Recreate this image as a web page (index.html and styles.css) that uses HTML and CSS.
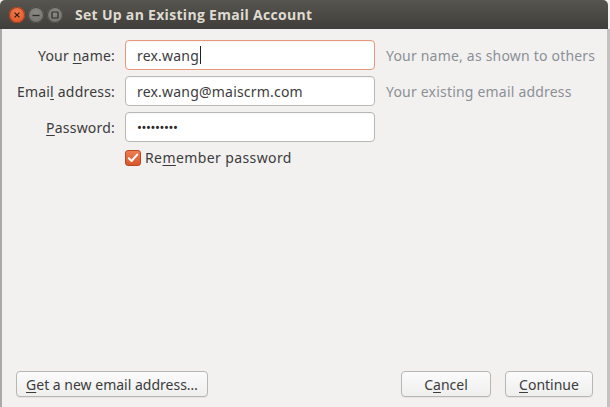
FILE: index.html
```html
<!DOCTYPE html>
<html>
<head>
<meta charset="utf-8">
<link rel="stylesheet" href="styles.css">
</head>
<body>
<div class="window">
  <div class="titlebar">
    <div class="controls">
      <span class="wbtn close"><svg width="16" height="16" viewBox="0 0 16 16"><path d="M5.6 5.6L10.4 10.4M10.4 5.6L5.6 10.4" stroke="#3b1a10" stroke-width="1.3" fill="none"/></svg></span>
      <span class="wbtn"><svg width="16" height="16" viewBox="0 0 16 16"><path d="M4.5 8.5H11.5" stroke="#2e2d2a" stroke-width="1.3"/></svg></span>
      <span class="wbtn"><svg width="16" height="16" viewBox="0 0 16 16"><rect x="5" y="5" width="6" height="6" rx="0.5" stroke="#2e2d2a" stroke-width="1.2" fill="none"/></svg></span>
    </div>
    <div class="title">Set Up an Existing Email Account</div>
  </div>
  <div class="content">
    <div class="form">
      <label class="label"><span>Your <u>n</u>ame:</span></label>
      <div class="input focus"><span>rex.wang</span><span class="caret"></span></div>
      <div class="hint">Your name, as shown to others</div>

      <label class="label"><span>Emai<u>l</u> address:</span></label>
      <div class="input"><span>rex.wang@maiscrm.com</span></div>
      <div class="hint">Your existing email address</div>

      <label class="label"><span><u>P</u>assword:</span></label>
      <div class="input pw"><span>•••••••••</span></div>
      <div class="hint"></div>

      <div></div>
      <div class="check-row"><span class="checkbox"><svg width="16" height="16" viewBox="0 0 16 16"><path d="M3.8 8.2L6.6 11L12.2 4.6" stroke="#fff" stroke-width="2" fill="none" stroke-linecap="round" stroke-linejoin="round"/></svg></span><span>Re<u>m</u>ember password</span></div>
      <div></div>
    </div>
    <div class="footer">
      <button class="btn wide"><u>G</u>et a new email address…</button>
      <div class="right">
        <button class="btn cancel">C<u>a</u>ncel</button>
        <button class="btn cont"><u>C</u>ontinue</button>
      </div>
    </div>
  </div>
</div>
</body>
</html>
```

FILE: styles.css
```css
html, body {
  margin: 0;
  padding: 0;
  width: 610px;
  height: 407px;
  overflow: hidden;
  background: #f2f1f0;
}
.window {
  width: 610px;
  height: 407px;
  display: flex;
  flex-direction: column;
  box-sizing: border-box;
  font-family: "Noto Sans", "DejaVu Sans", sans-serif;
  color: #3c3c3c;
}
.titlebar {
  height: 29px;
  flex: none;
  display: flex;
  align-items: center;
  background: linear-gradient(#56554f, #3f3e3a);
  border-radius: 5px 5px 0 0;
  margin-right: 2px;
}
.controls {
  display: flex;
  gap: 3px;
  margin-left: 9px;
}
.wbtn {
  width: 16px;
  height: 16px;
  border-radius: 50%;
  background: radial-gradient(circle at 50% 35%, #8a8983, #6d6c67);
  box-shadow: inset 0 0 0 1px #4a4944;
  display: flex;
}
.wbtn.close {
  background: radial-gradient(circle at 50% 35%, #f07c50, #de4e1f);
  box-shadow: inset 0 0 0 1px #a3401f;
}
.title {
  margin-left: 12px;
  color: #dfdbd2;
  font-family: "Open Sans", "Noto Sans", sans-serif;
  font-weight: bold;
  font-size: 14px;
  letter-spacing: 0.3px;
}
.content {
  flex: 1;
  display: flex;
  flex-direction: column;
  border-left: 2px solid #a9a9a7;
  border-right: 3px solid #c2c2c0;
  padding: 11px 0 10px 0;
}
.form {
  display: grid;
  grid-template-columns: 113px 249px 1fr;
  column-gap: 11px;
  row-gap: 6px;
  grid-auto-rows: 30px;
  font-size: 14px;
  letter-spacing: 0.2px;
}
.form > :nth-child(3n+2) { margin-left: -1px; }
.label {
  display: flex;
  align-items: center;
  justify-content: flex-end;
  color: #3c3c3c;
  white-space: nowrap;
}
u {
  text-decoration: underline;
  text-underline-offset: 2px;
}
.input {
  box-sizing: border-box;
  height: 30px;
  border: 1px solid #b8b8b5;
  border-radius: 4px;
  background: #fff;
  display: flex;
  align-items: center;
  padding-left: 11px;
  color: #3c3c3c;
  box-shadow: inset 0 1px 1px rgba(0,0,0,0.04);
}
.input.focus {
  border-color: #e7987a;
}
.input.pw {
  font-size: 13px;
  letter-spacing: -0.4px;
  padding-left: 11px;
  color: #2a2a2a;
}
.caret {
  display: inline-block;
  width: 1px;
  height: 18px;
  background: #222;
  margin-left: 1px;
}
.hint {
  display: flex;
  align-items: center;
  color: #8b9096;
  white-space: nowrap;
}
.check-row {
  display: flex;
  align-items: center;
  gap: 4px;
  height: 19px;
  margin-left: 1px;
  align-self: start;
  white-space: nowrap;
  letter-spacing: 0.4px;
}
.checkbox {
  width: 16px;
  height: 16px;
  box-sizing: border-box;
  border-radius: 3px;
  background: linear-gradient(#ee7c52, #d9572a);
  border: 1px solid #b74a22;
  display: flex;
  align-items: center;
  justify-content: center;
}
.checkbox svg { margin: -1px; }
.footer {
  margin-top: auto;
  display: flex;
  justify-content: space-between;
  padding: 0 14px 0 14px;
}
.right {
  display: flex;
  gap: 14px;
}
.btn {
  height: 26px;
  box-sizing: border-box;
  border: 1px solid #b7b6b2;
  border-radius: 4px;
  background: linear-gradient(#fbfbfb, #efefee);
  font-family: "Noto Sans", "DejaVu Sans", sans-serif;
  font-size: 14px;
  color: #3c3c3c;
  padding: 0;
  box-shadow: 0 1px 0 rgba(0,0,0,0.05);
}
.btn.wide { width: 192px; }
.btn.cancel { width: 90px; }
.btn.cont { width: 88px; }
```
